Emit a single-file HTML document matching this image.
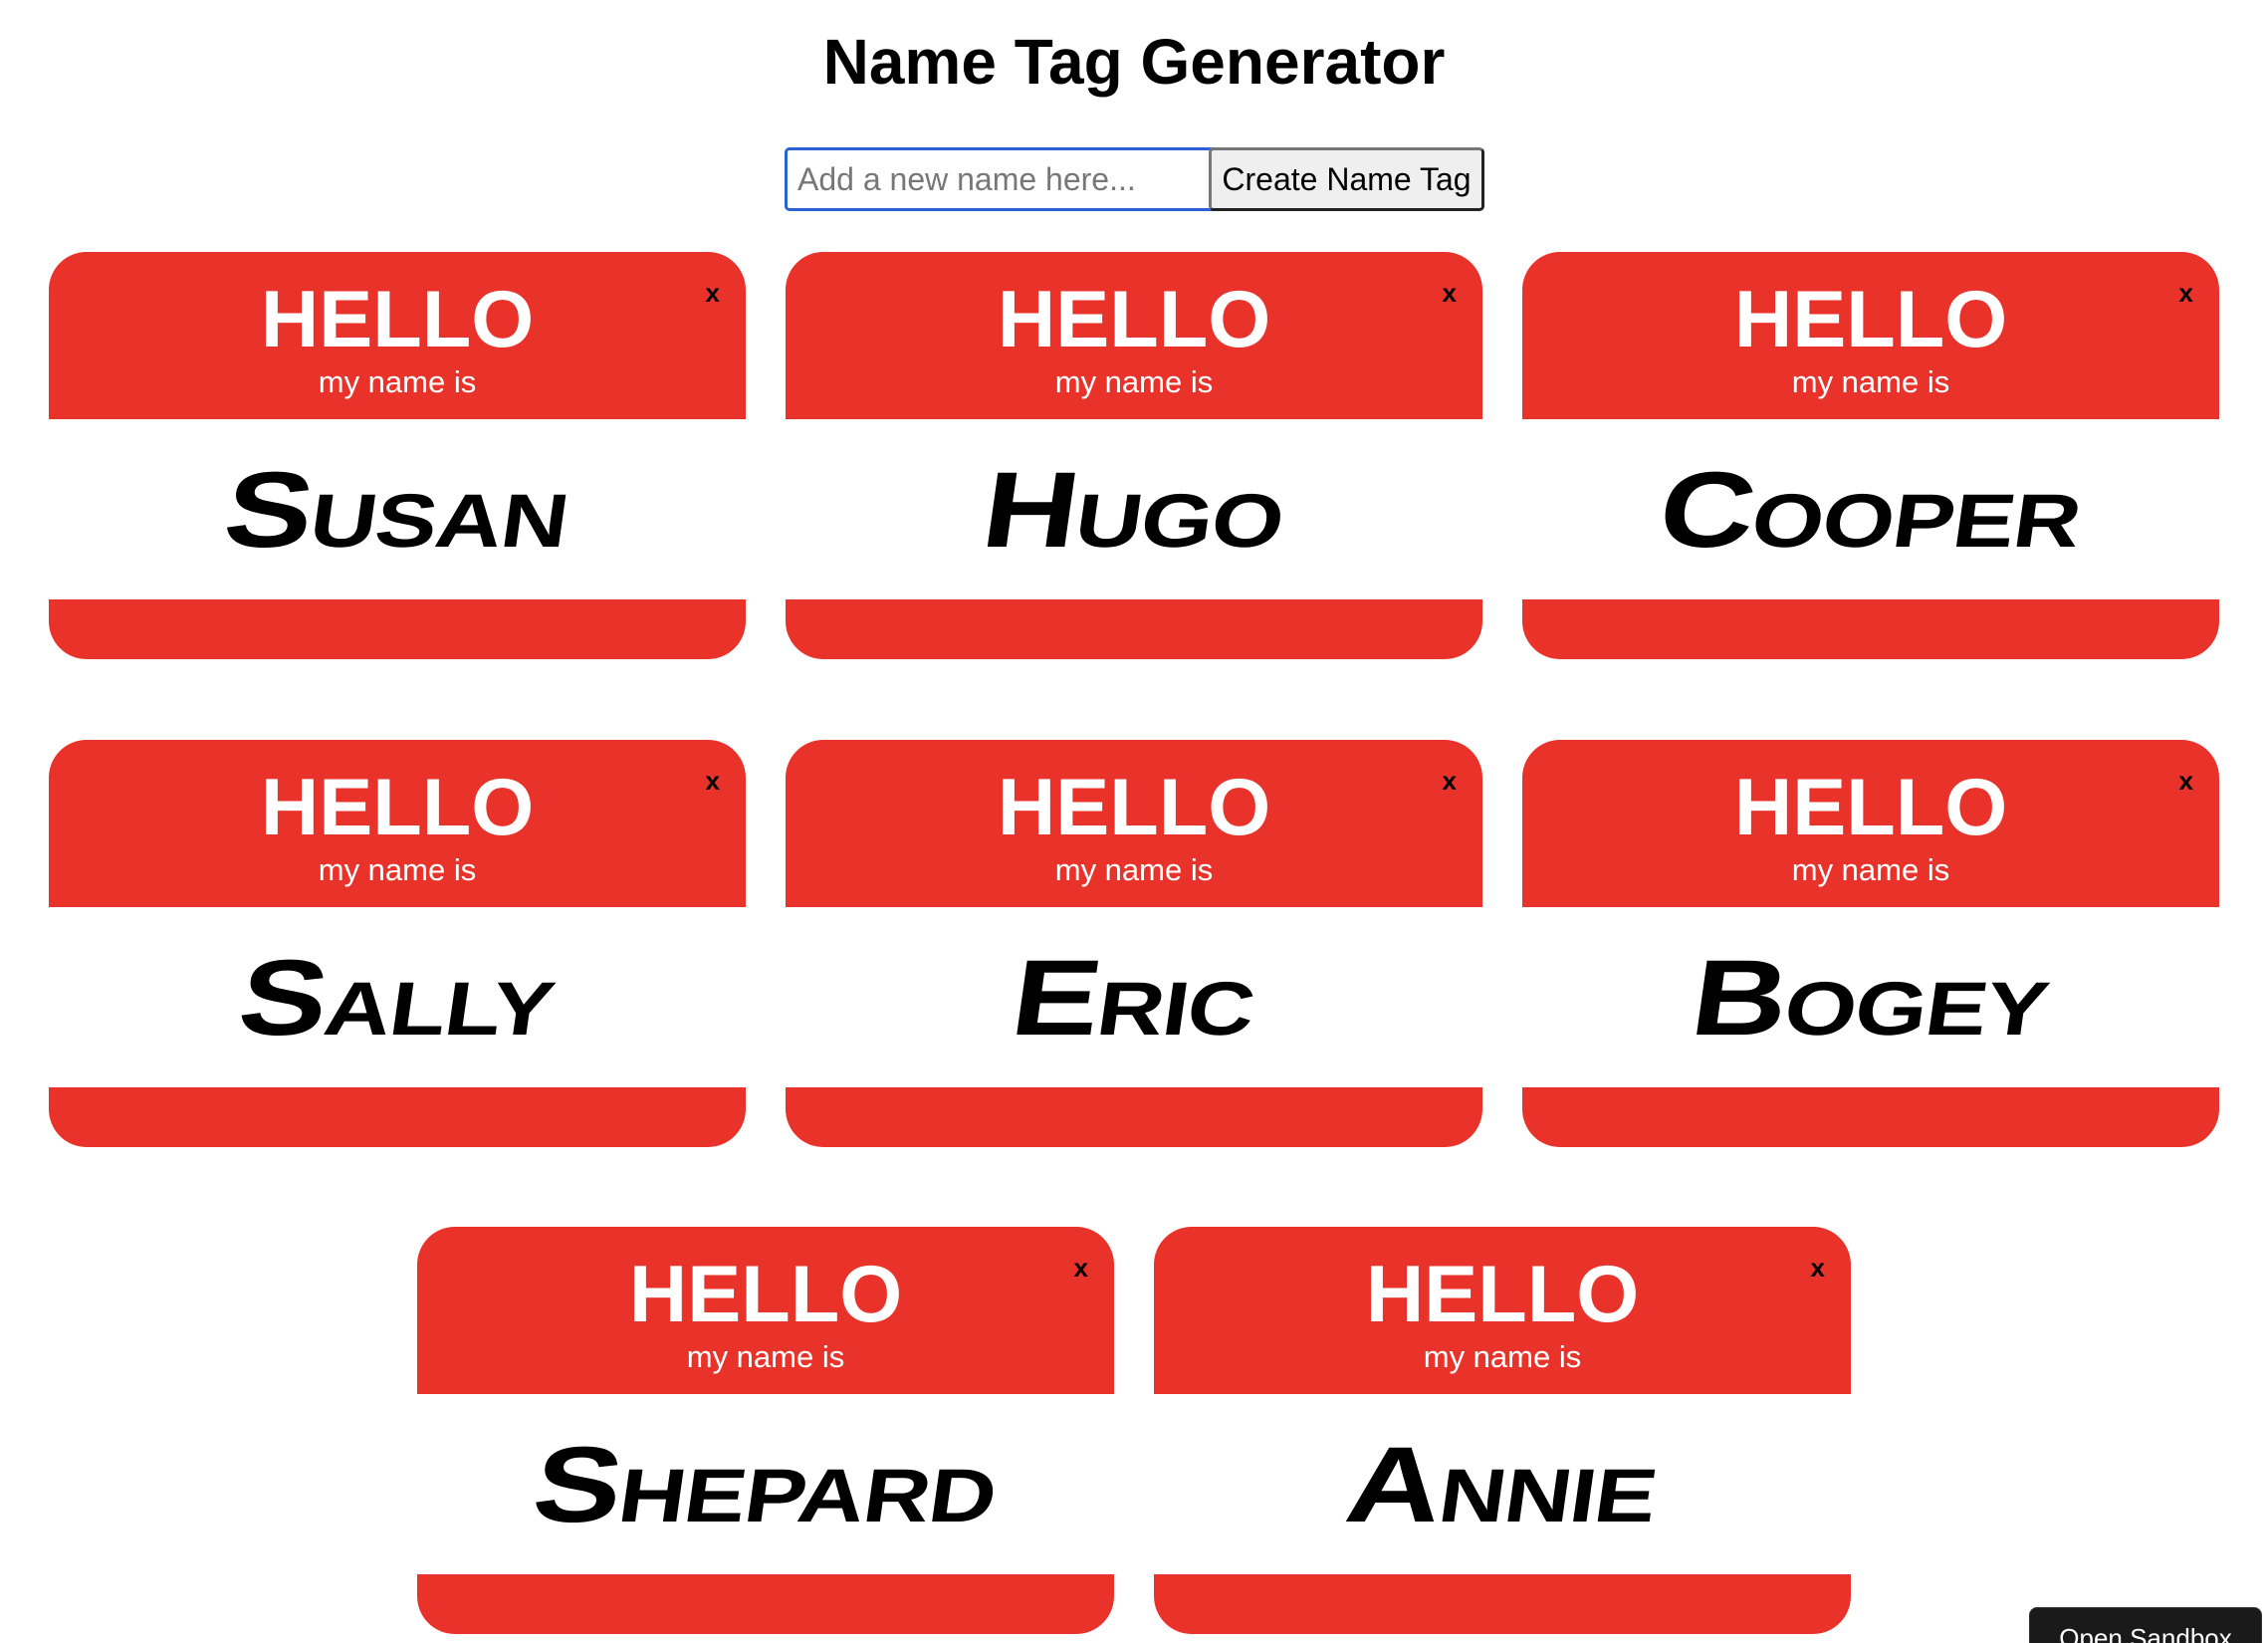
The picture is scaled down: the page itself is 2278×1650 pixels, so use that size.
<!DOCTYPE html>
<html><head><meta charset="utf-8"><style>
html,body{margin:0;padding:0;background:#fff;width:2278px;height:1650px;overflow:hidden;font-family:"Liberation Sans",Arial,sans-serif;position:relative}
h1{position:absolute;left:0;width:2278px;top:24px;margin:0;text-align:center;font-size:64px;line-height:76px;font-weight:bold;color:#000}
.inp{position:absolute;left:788px;top:148px;width:421px;height:58px;border:3px solid #2a62d6;border-radius:5px;font-size:32px;line-height:58px;color:#777;padding-left:10px;box-sizing:content-box}
.btn{position:absolute;left:1214px;top:148px;width:271px;height:58px;border:3px solid #222;border-top-color:#777;border-left-color:#777;border-radius:5px;background:#efefef;font-size:32px;line-height:58px;text-align:center;color:#000}
.card{position:absolute;width:700px;height:409px;background:#e9332a;border-radius:38px;overflow:hidden}
.hello{position:absolute;left:0;right:0;top:22px;text-align:center;color:#fff;font-weight:bold;font-size:81px;line-height:92px}
.my{position:absolute;left:0;right:0;top:111px;text-align:center;color:#fff;font-size:31px;line-height:40px}
.x{position:absolute;right:26px;top:26px;font-size:26px;font-weight:bold;color:#000;line-height:30px}
.white{position:absolute;left:0;right:0;top:168px;height:181px;background:#fff}
.name{position:absolute;left:0;right:0;top:36px;text-align:center;font-weight:900;font-size:108px;line-height:110px;font-variant:small-caps;letter-spacing:-1px;color:#000;transform:skewX(-8deg) scaleX(1.22)}
.sb{position:absolute;left:2038px;top:1614px;width:232px;height:60px;background:#1a1a1a;border-radius:8px;border:1px solid #333;color:#fff;font-size:26px;text-align:center;line-height:60px}
</style></head><body>
<h1>Name Tag Generator</h1>
<div class="inp">Add a new name here...</div>
<div class="btn">Create Name Tag</div>

<div class="card" style="left:49px;top:253px"><div class="hello">HELLO</div><div class="my">my name is</div><div class="x">x</div><div class="white"><div class="name">Susan</div></div></div>
<div class="card" style="left:789px;top:253px"><div class="hello">HELLO</div><div class="my">my name is</div><div class="x">x</div><div class="white"><div class="name">Hugo</div></div></div>
<div class="card" style="left:1529px;top:253px"><div class="hello">HELLO</div><div class="my">my name is</div><div class="x">x</div><div class="white"><div class="name">Cooper</div></div></div>

<div class="card" style="left:49px;top:743px"><div class="hello">HELLO</div><div class="my">my name is</div><div class="x">x</div><div class="white"><div class="name">Sally</div></div></div>
<div class="card" style="left:789px;top:743px"><div class="hello">HELLO</div><div class="my">my name is</div><div class="x">x</div><div class="white"><div class="name">Eric</div></div></div>
<div class="card" style="left:1529px;top:743px"><div class="hello">HELLO</div><div class="my">my name is</div><div class="x">x</div><div class="white"><div class="name">Bogey</div></div></div>

<div class="card" style="left:419px;top:1232px"><div class="hello">HELLO</div><div class="my">my name is</div><div class="x">x</div><div class="white"><div class="name">Shepard</div></div></div>
<div class="card" style="left:1159px;top:1232px"><div class="hello">HELLO</div><div class="my">my name is</div><div class="x">x</div><div class="white"><div class="name">Annie</div></div></div>

<div class="sb">Open Sandbox</div>
</body></html>
